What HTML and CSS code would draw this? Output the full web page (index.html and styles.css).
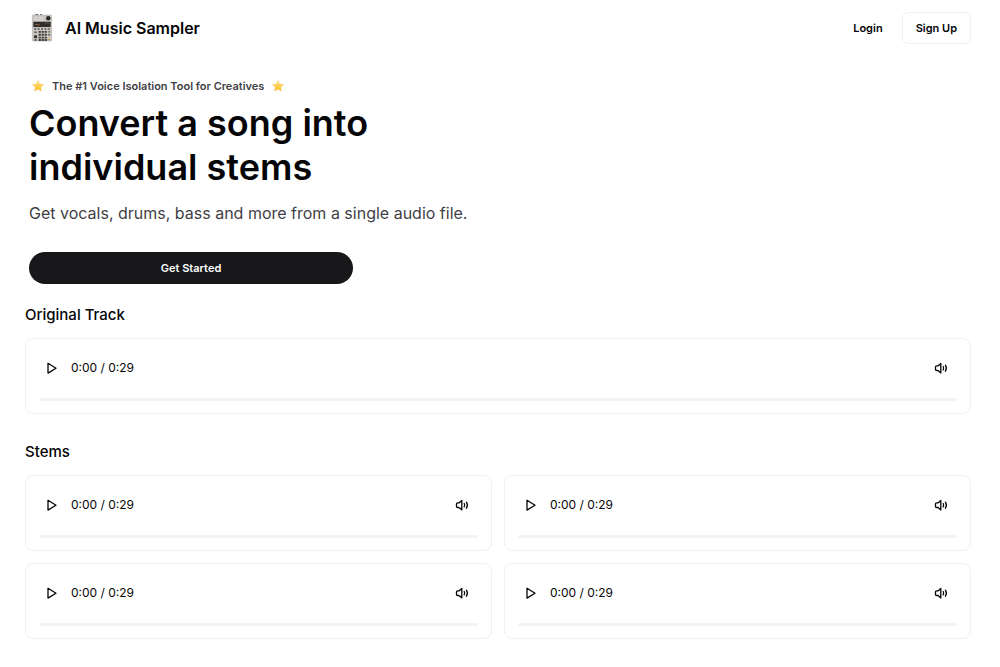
FILE: index.html
```
<!DOCTYPE html>
<html lang="en">
<head>
	<meta charset="utf-8">
	<meta name="viewport" content="width=device-width, initial-scale=1">
	<title>AI Music Sampler</title>
	<link rel="stylesheet" href="styles.css">
</head>
<body>
	<!-- shared icons -->
	<svg class="sprite" aria-hidden="true">
		<symbol id="play" viewBox="0 0 16 16">
			<path d="M4 3.300v9.800l8-4.900z" fill="none" stroke="currentColor" stroke-width="1.3" stroke-linejoin="round"/>
		</symbol>
		<symbol id="volume" viewBox="0 0 16 16">
			<path d="M7.8 3.500v9.400L5 10.500H3.500a1 1 0 0 1-1-1V6.900a1 1 0 0 1 1-1H5z" fill="none" stroke="currentColor" stroke-width="1.3" stroke-linejoin="round"/>
			<path d="M10.2 6.500q1 1.700 0 3.400M12.400 5.200q2 3 0 6" fill="none" stroke="currentColor" stroke-width="1.3" stroke-linecap="round"/>
		</symbol>
		<symbol id="star" viewBox="0 0 12 12">
			<path d="M6 .6l1.500 3.700 4 .3-3 2.600.9 3.900L6 9l-3.400 2.100.9-3.900-3-2.600 4-.3z" fill="url(#gold)" stroke="#f5b52c" stroke-width=".4" stroke-linejoin="round"/>
		</symbol>
		<linearGradient id="gold" x1="0" y1="0" x2="0" y2="1">
			<stop offset="0" stop-color="#ffe9a0"/>
			<stop offset="1" stop-color="#fbb800"/>
		</linearGradient>
	</svg>

	<header class="header">
		<a href="#" class="brand">
			<svg class="logo" viewBox="0 0 22 29" aria-hidden="true">
				<rect x="1" y="1" width="20" height="27" rx="1" fill="#c9c6c1" stroke="#aaa6a1" stroke-width=".5"/>
				<path d="M4 .5h3M9 .5h2" stroke="#666"/>
				<path d="M3 3.500h3M8 3.500h4M3 6h9" stroke="#e5e3df"/>
				<circle cx="17.500" cy="4.500" r="2.300" fill="#292827"/>
				<rect x="2" y="8" width="18" height="5.500" fill="#302d2b"/>
				<path d="M3.500 11h5" stroke="#96603e"/>
				<path d="M14 9.500h4" stroke="#5b5550"/>
				<path d="M3 15.500h17" stroke="#56524e" stroke-width="1.500" stroke-dasharray="2 1.500"/>
				<path d="M7.500 18.500h8.500M7.500 21.500h8.500M7.500 24.500h8.500M7.500 27h8.500" stroke="#403d3a" stroke-width="2" stroke-dasharray="2.300 .8"/>
				<circle cx="4.300" cy="23.500" r="1.800" fill="#383532"/>
				<path d="M3 19h2.500M3 27h2.500M17.500 18.500h2M17.500 21.500h2" stroke="#5c5753" stroke-width="1.500"/>
				<path d="M16.500 26.500h3" stroke="#c6a259" stroke-width="1.500"/>
			</svg>
			AI Music Sampler
		</a>
		<nav class="nav">
			<a href="#" class="login">Login</a>
			<a href="#" class="signup">Sign Up</a>
		</nav>
	</header>

	<main>
		<section class="hero">
			<p class="tagline">
				<svg class="star"><use href="#star"/></svg>
				The #1 Voice Isolation Tool for Creatives
				<svg class="star"><use href="#star"/></svg>
			</p>
			<h1>Convert a song into<br>individual stems</h1>
			<p class="lead">Get vocals, drums, bass and more from a single audio file.</p>
			<button type="button" class="start">Get Started</button>
		</section>

		<section class="tracks">
			<h2>Original Track</h2>
			<div class="player">
				<div class="controls">
					<button type="button" class="icon play" aria-label="Play"><svg><use href="#play"/></svg></button>
					<span class="time">0:00 / 0:29</span>
					<button type="button" class="icon" aria-label="Volume"><svg><use href="#volume"/></svg></button>
				</div>
				<input type="range" class="seek" min="0" max="29" value="0" aria-label="Seek">
			</div>
		</section>

		<section class="tracks">
			<h2>Stems</h2>
			<div class="stems">
				<div class="player">
					<div class="controls">
						<button type="button" class="icon play" aria-label="Play"><svg><use href="#play"/></svg></button>
						<span class="time">0:00 / 0:29</span>
						<button type="button" class="icon" aria-label="Volume"><svg><use href="#volume"/></svg></button>
					</div>
					<input type="range" class="seek" min="0" max="29" value="0" aria-label="Seek">
				</div>
				<div class="player">
					<div class="controls">
						<button type="button" class="icon play" aria-label="Play"><svg><use href="#play"/></svg></button>
						<span class="time">0:00 / 0:29</span>
						<button type="button" class="icon" aria-label="Volume"><svg><use href="#volume"/></svg></button>
					</div>
					<input type="range" class="seek" min="0" max="29" value="0" aria-label="Seek">
				</div>
				<div class="player">
					<div class="controls">
						<button type="button" class="icon play" aria-label="Play"><svg><use href="#play"/></svg></button>
						<span class="time">0:00 / 0:29</span>
						<button type="button" class="icon" aria-label="Volume"><svg><use href="#volume"/></svg></button>
					</div>
					<input type="range" class="seek" min="0" max="29" value="0" aria-label="Seek">
				</div>
				<div class="player">
					<div class="controls">
						<button type="button" class="icon play" aria-label="Play"><svg><use href="#play"/></svg></button>
						<span class="time">0:00 / 0:29</span>
						<button type="button" class="icon" aria-label="Volume"><svg><use href="#volume"/></svg></button>
					</div>
					<input type="range" class="seek" min="0" max="29" value="0" aria-label="Seek">
				</div>
			</div>
		</section>
	</main>
</body>
</html>
```
FILE: styles.css
```
* {
	box-sizing: border-box;
	margin: 0;
}

body {
	background: #fff;
	color: #050507;
	font-family: Inter, "Liberation Sans", sans-serif;
	font-size: 12px;
	line-height: 16px;
}

a {
	color: inherit;
	text-decoration: none;
}

button {
	font: inherit;
	cursor: pointer;
}

.sprite {
	position: absolute;
	width: 0;
	height: 0;
}

/* Header */
.header {
	display: flex;
	justify-content: space-between;
	align-items: center;
	padding: 12px 29px 12px 31px;
}

.brand {
	display: flex;
	align-items: center;
	gap: 12px;
	font-size: 16px;
	font-weight: 600;
}

.logo {
	width: 22px;
	height: 28px;
}

.nav {
	display: flex;
	align-items: center;
	gap: 19px;
	font-size: 11px;
	font-weight: 600;
}

.signup {
	padding: 7px 13px;
	border: 1px solid #f0f0f1;
	border-radius: 6px;
}

/* Hero */
.hero {
	padding: 22px 29px 0;
}

.tagline {
	display: flex;
	align-items: center;
	gap: 8px;
	padding-left: 3px;
	color: #3f3f46;
	font-size: 11px;
	font-weight: 600;
}

.star {
	width: 12px;
	height: 12px;
}

h1 {
	margin-top: 7px;
	font-size: 36px;
	font-weight: 600;
	line-height: 44px;
}

.lead {
	margin-top: 12px;
	color: #3f3f46;
	font-size: 16px;
	line-height: 24px;
}

.start {
	width: 324px;
	max-width: 100%;
	height: 32px;
	margin-top: 27px;
	border: 0;
	border-radius: 16px;
	background: #18181b;
	color: #fff;
	font-size: 11px;
	font-weight: 600;
}

/* Players */
.tracks {
	padding: 21px 29px 7px 25px;
}

h2 {
	margin-bottom: 13px;
	font-size: 15px;
	font-weight: 500;
	line-height: 20px;
}

.stems {
	display: grid;
	grid-template-columns: 1fr 1fr;
	gap: 12px;
}

.player {
	padding: 13px 13px 12px;
	border: 1px solid #f0f0f1;
	border-radius: 8px;
}

.controls {
	display: flex;
	align-items: center;
}

.icon {
	display: flex;
	width: 32px;
	height: 32px;
	padding: 8px;
	border: 0;
	background: none;
	color: inherit;
}

.play {
	width: 26px;
	padding: 8px 5px;
	margin-right: 6px;
}

.icon svg {
	width: 16px;
	height: 16px;
}

.time {
	flex: 1;
}

.seek {
	display: block;
	width: 100%;
	height: 3px;
	margin-top: 14px;
	border-radius: 2px;
	background: #f4f4f5;
	appearance: none;
	-webkit-appearance: none;
}

.seek::-webkit-slider-thumb {
	-webkit-appearance: none;
	width: 0;
	height: 0;
}
```
